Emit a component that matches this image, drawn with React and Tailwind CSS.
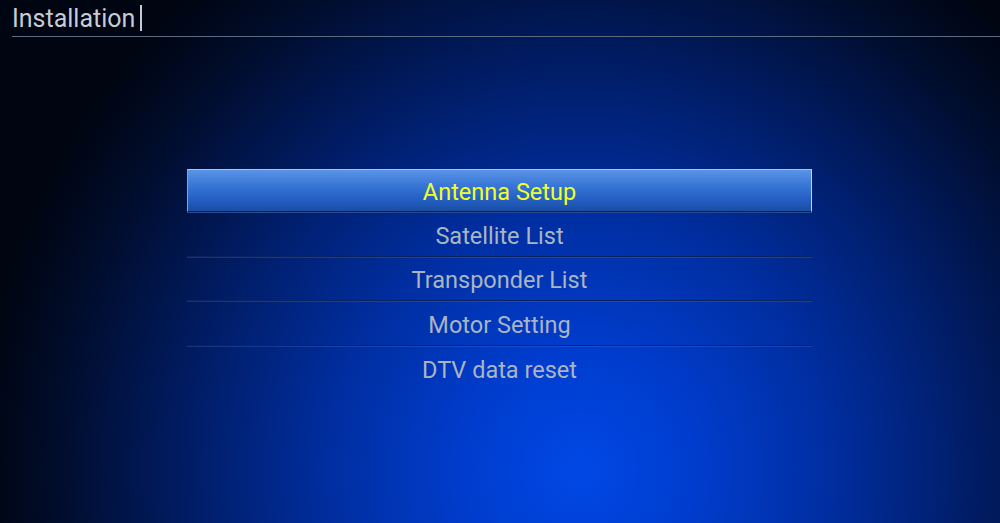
import React from "react";

const items = ["Satellite List", "Transponder List", "Motor Setting", "DTV data reset"];

export default function App() {
  return (
    <div
      className="relative w-[1000px] h-[523px] overflow-hidden font-['Roboto',sans-serif] bg-[radial-gradient(ellipse_600px_620px_at_580px_470px,#0048e6_0%,#003ccc_20%,#002ea0_42%,#001c64_66%,#000c2a_88%,#000512_100%)]"
    >
      <div className="pl-[12px] pt-[3px]">
        <div className="flex items-center h-[30px]">
          <span className="text-[25px] leading-none text-[#c6ccd4]">Installation</span>
          <span className="ml-[5px] w-[1.5px] h-[26px] bg-[#c6ccd4]" />
        </div>
        <div className="mt-[3px] h-[1px] bg-[#5c6b80]" />
      </div>

      <div className="ml-[187px] mt-[132px] w-[625px] flex flex-col">
        <div className="h-[43px] flex items-center justify-center border-t border-l border-r border-t-[#a8c4ec] border-l-[#7ea4dc] border-r-[#c8d4e4] border-b border-b-[#0a1e50] bg-[linear-gradient(180deg,#5a94e6_0%,#3a78d8_35%,#2460c4_70%,#1a4ea4_100%)] shadow-[0_1px_0_#2a4a90]">
          <span className="text-[23.5px] text-[#f0ff2a] leading-none pt-[4px]">Antenna Setup</span>
        </div>
        {items.map((t, i) => (
          <div
            key={t}
            className={
              i < items.length - 1
                ? "h-[44.5px] flex items-center justify-center border-b border-b-[#0a2260] shadow-[0_1px_0_rgba(90,130,220,0.25)]"
                : "h-[44.5px] flex items-center justify-center"
            }
          >
            <span className="text-[23.5px] text-[#aab5c2] leading-none pt-[5px]">{t}</span>
          </div>
        ))}
      </div>
    </div>
  );
}
